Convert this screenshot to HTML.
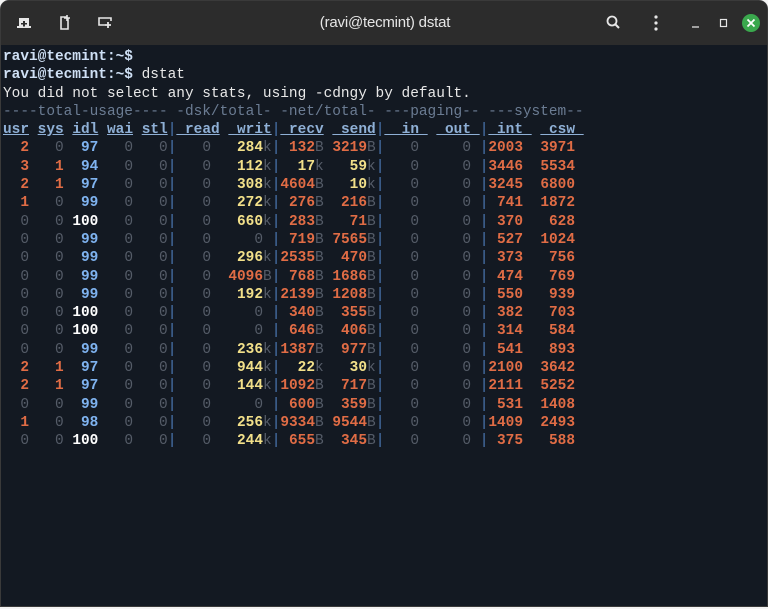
<!DOCTYPE html>
<html><head><meta charset="utf-8"><style>
html,body{margin:0;padding:0;background:#f4f4f4;width:768px;height:609px;overflow:hidden}
.win{position:absolute;left:0;top:0;width:768px;height:607px;background:#131922;border-radius:9px 9px 0 0;overflow:hidden;border:1px solid #3a3a3a;box-sizing:border-box}
.bar{position:absolute;left:0;top:0;width:768px;height:44px;background:#2c2c2c;color:#e6e6e6;font-family:"Liberation Sans","DejaVu Sans",sans-serif}
.title{position:absolute;left:0;right:0;top:13px;text-align:center;font-size:15px;letter-spacing:-0.2px}
pre{position:absolute;left:2px;top:47px;margin:0;font-family:"Liberation Mono","DejaVu Sans Mono",monospace;font-size:14.45px;line-height:18.3px;color:#e8e8e8;white-space:pre}
.p{color:#cfe0f5;font-weight:bold}
.h{color:#6b7c93}
.t{color:#8fb0d6;font-weight:bold;text-decoration:underline}
.s{color:#4c7ab8}
.d{color:#555c68}
.o{color:#e06c45;font-weight:bold}
.b{color:#7fb3f0;font-weight:bold}
.w{color:#ffffff;font-weight:bold}
.y{color:#f2e08a;font-weight:bold}
.u{color:#555c68}
</style></head><body>
<div class="win">
<div class="bar">
<svg width="768" height="44" style="position:absolute;left:0;top:0">
 <g fill="#e6e6e6">
  <path d="M18 17h10v8h2v2H16v-2h2z"/>
 </g>
 <path d="M22 20h2v2h2v1.5h-2v2h-2v-2h-2V22h2z" fill="#2c2c2c"/>
 <path d="M60 16h5l2 2v10h-7z" fill="none" stroke="#e6e6e6" stroke-width="1.6"/>
 <path d="M66 14v6M63 17h6" stroke="#e6e6e6" stroke-width="1.6"/>
 <path d="M104 24h-6v-7h12v3" fill="none" stroke="#e6e6e6" stroke-width="1.6"/>
 <path d="M107 21v6M104 24h6" stroke="#e6e6e6" stroke-width="1.8"/>
 <circle cx="611" cy="20" r="4.5" fill="none" stroke="#e6e6e6" stroke-width="1.8"/>
 <path d="M614.5 23.5l3.5 3.5" stroke="#e6e6e6" stroke-width="2"/>
 <circle cx="655" cy="16" r="1.6" fill="#e6e6e6"/><circle cx="655" cy="22" r="1.6" fill="#e6e6e6"/><circle cx="655" cy="28" r="1.6" fill="#e6e6e6"/>
 <path d="M691 26h7" stroke="#e6e6e6" stroke-width="1.3"/>
 <rect x="719.5" y="18.5" width="6" height="7" fill="none" stroke="#e6e6e6" stroke-width="1.2"/>
 <circle cx="750" cy="22" r="9" fill="#3aa84d"/>
 <path d="M746.5 18.5l7 7M753.5 18.5l-7 7" stroke="#fff" stroke-width="1.8"/>
</svg>
<div class="title">(ravi@tecmint) dstat</div>
</div>
<pre><span class="p">ravi@tecmint:~$</span>
<span class="p">ravi@tecmint:~$</span> dstat
You did not select any stats, using -cdngy by default.
<span class="h">----total-usage---- -dsk/total- -net/total- ---paging-- ---system--</span>
<span class="t">usr</span> <span class="t">sys</span> <span class="t">idl</span> <span class="t">wai</span> <span class="t">stl</span><span class="s">|</span><span class="t"> read</span> <span class="t"> writ</span><span class="s">|</span><span class="t"> recv</span> <span class="t"> send</span><span class="s">|</span><span class="t">  in </span> <span class="t"> out </span><span class="s">|</span><span class="t"> int </span> <span class="t"> csw </span>
<span class="o">  2</span> <span class="d">  0</span> <span class="b"> 97</span> <span class="d">  0</span> <span class="d">  0</span><span class="s">|</span><span class="d">   0 </span> <span class="y"> 284</span><span class="u">k</span><span class="s">|</span><span class="o"> 132</span><span class="u">B</span> <span class="o">3219</span><span class="u">B</span><span class="s">|</span><span class="d">   0 </span> <span class="d">   0 </span><span class="s">|</span><span class="o">2003 </span> <span class="o">3971</span>
<span class="o">  3</span> <span class="o">  1</span> <span class="b"> 94</span> <span class="d">  0</span> <span class="d">  0</span><span class="s">|</span><span class="d">   0 </span> <span class="y"> 112</span><span class="u">k</span><span class="s">|</span><span class="y">  17</span><span class="u">k</span> <span class="y">  59</span><span class="u">k</span><span class="s">|</span><span class="d">   0 </span> <span class="d">   0 </span><span class="s">|</span><span class="o">3446 </span> <span class="o">5534</span>
<span class="o">  2</span> <span class="o">  1</span> <span class="b"> 97</span> <span class="d">  0</span> <span class="d">  0</span><span class="s">|</span><span class="d">   0 </span> <span class="y"> 308</span><span class="u">k</span><span class="s">|</span><span class="o">4604</span><span class="u">B</span> <span class="y">  10</span><span class="u">k</span><span class="s">|</span><span class="d">   0 </span> <span class="d">   0 </span><span class="s">|</span><span class="o">3245 </span> <span class="o">6800</span>
<span class="o">  1</span> <span class="d">  0</span> <span class="b"> 99</span> <span class="d">  0</span> <span class="d">  0</span><span class="s">|</span><span class="d">   0 </span> <span class="y"> 272</span><span class="u">k</span><span class="s">|</span><span class="o"> 276</span><span class="u">B</span> <span class="o"> 216</span><span class="u">B</span><span class="s">|</span><span class="d">   0 </span> <span class="d">   0 </span><span class="s">|</span><span class="o"> 741 </span> <span class="o">1872</span>
<span class="d">  0</span> <span class="d">  0</span> <span class="w">100</span> <span class="d">  0</span> <span class="d">  0</span><span class="s">|</span><span class="d">   0 </span> <span class="y"> 660</span><span class="u">k</span><span class="s">|</span><span class="o"> 283</span><span class="u">B</span> <span class="o">  71</span><span class="u">B</span><span class="s">|</span><span class="d">   0 </span> <span class="d">   0 </span><span class="s">|</span><span class="o"> 370 </span> <span class="o"> 628</span>
<span class="d">  0</span> <span class="d">  0</span> <span class="b"> 99</span> <span class="d">  0</span> <span class="d">  0</span><span class="s">|</span><span class="d">   0 </span> <span class="d">   0 </span><span class="s">|</span><span class="o"> 719</span><span class="u">B</span> <span class="o">7565</span><span class="u">B</span><span class="s">|</span><span class="d">   0 </span> <span class="d">   0 </span><span class="s">|</span><span class="o"> 527 </span> <span class="o">1024</span>
<span class="d">  0</span> <span class="d">  0</span> <span class="b"> 99</span> <span class="d">  0</span> <span class="d">  0</span><span class="s">|</span><span class="d">   0 </span> <span class="y"> 296</span><span class="u">k</span><span class="s">|</span><span class="o">2535</span><span class="u">B</span> <span class="o"> 470</span><span class="u">B</span><span class="s">|</span><span class="d">   0 </span> <span class="d">   0 </span><span class="s">|</span><span class="o"> 373 </span> <span class="o"> 756</span>
<span class="d">  0</span> <span class="d">  0</span> <span class="b"> 99</span> <span class="d">  0</span> <span class="d">  0</span><span class="s">|</span><span class="d">   0 </span> <span class="o">4096</span><span class="u">B</span><span class="s">|</span><span class="o"> 768</span><span class="u">B</span> <span class="o">1686</span><span class="u">B</span><span class="s">|</span><span class="d">   0 </span> <span class="d">   0 </span><span class="s">|</span><span class="o"> 474 </span> <span class="o"> 769</span>
<span class="d">  0</span> <span class="d">  0</span> <span class="b"> 99</span> <span class="d">  0</span> <span class="d">  0</span><span class="s">|</span><span class="d">   0 </span> <span class="y"> 192</span><span class="u">k</span><span class="s">|</span><span class="o">2139</span><span class="u">B</span> <span class="o">1208</span><span class="u">B</span><span class="s">|</span><span class="d">   0 </span> <span class="d">   0 </span><span class="s">|</span><span class="o"> 550 </span> <span class="o"> 939</span>
<span class="d">  0</span> <span class="d">  0</span> <span class="w">100</span> <span class="d">  0</span> <span class="d">  0</span><span class="s">|</span><span class="d">   0 </span> <span class="d">   0 </span><span class="s">|</span><span class="o"> 340</span><span class="u">B</span> <span class="o"> 355</span><span class="u">B</span><span class="s">|</span><span class="d">   0 </span> <span class="d">   0 </span><span class="s">|</span><span class="o"> 382 </span> <span class="o"> 703</span>
<span class="d">  0</span> <span class="d">  0</span> <span class="w">100</span> <span class="d">  0</span> <span class="d">  0</span><span class="s">|</span><span class="d">   0 </span> <span class="d">   0 </span><span class="s">|</span><span class="o"> 646</span><span class="u">B</span> <span class="o"> 406</span><span class="u">B</span><span class="s">|</span><span class="d">   0 </span> <span class="d">   0 </span><span class="s">|</span><span class="o"> 314 </span> <span class="o"> 584</span>
<span class="d">  0</span> <span class="d">  0</span> <span class="b"> 99</span> <span class="d">  0</span> <span class="d">  0</span><span class="s">|</span><span class="d">   0 </span> <span class="y"> 236</span><span class="u">k</span><span class="s">|</span><span class="o">1387</span><span class="u">B</span> <span class="o"> 977</span><span class="u">B</span><span class="s">|</span><span class="d">   0 </span> <span class="d">   0 </span><span class="s">|</span><span class="o"> 541 </span> <span class="o"> 893</span>
<span class="o">  2</span> <span class="o">  1</span> <span class="b"> 97</span> <span class="d">  0</span> <span class="d">  0</span><span class="s">|</span><span class="d">   0 </span> <span class="y"> 944</span><span class="u">k</span><span class="s">|</span><span class="y">  22</span><span class="u">k</span> <span class="y">  30</span><span class="u">k</span><span class="s">|</span><span class="d">   0 </span> <span class="d">   0 </span><span class="s">|</span><span class="o">2100 </span> <span class="o">3642</span>
<span class="o">  2</span> <span class="o">  1</span> <span class="b"> 97</span> <span class="d">  0</span> <span class="d">  0</span><span class="s">|</span><span class="d">   0 </span> <span class="y"> 144</span><span class="u">k</span><span class="s">|</span><span class="o">1092</span><span class="u">B</span> <span class="o"> 717</span><span class="u">B</span><span class="s">|</span><span class="d">   0 </span> <span class="d">   0 </span><span class="s">|</span><span class="o">2111 </span> <span class="o">5252</span>
<span class="d">  0</span> <span class="d">  0</span> <span class="b"> 99</span> <span class="d">  0</span> <span class="d">  0</span><span class="s">|</span><span class="d">   0 </span> <span class="d">   0 </span><span class="s">|</span><span class="o"> 600</span><span class="u">B</span> <span class="o"> 359</span><span class="u">B</span><span class="s">|</span><span class="d">   0 </span> <span class="d">   0 </span><span class="s">|</span><span class="o"> 531 </span> <span class="o">1408</span>
<span class="o">  1</span> <span class="d">  0</span> <span class="b"> 98</span> <span class="d">  0</span> <span class="d">  0</span><span class="s">|</span><span class="d">   0 </span> <span class="y"> 256</span><span class="u">k</span><span class="s">|</span><span class="o">9334</span><span class="u">B</span> <span class="o">9544</span><span class="u">B</span><span class="s">|</span><span class="d">   0 </span> <span class="d">   0 </span><span class="s">|</span><span class="o">1409 </span> <span class="o">2493</span>
<span class="d">  0</span> <span class="d">  0</span> <span class="w">100</span> <span class="d">  0</span> <span class="d">  0</span><span class="s">|</span><span class="d">   0 </span> <span class="y"> 244</span><span class="u">k</span><span class="s">|</span><span class="o"> 655</span><span class="u">B</span> <span class="o"> 345</span><span class="u">B</span><span class="s">|</span><span class="d">   0 </span> <span class="d">   0 </span><span class="s">|</span><span class="o"> 375 </span> <span class="o"> 588</span></pre>
</div>
</body></html>
